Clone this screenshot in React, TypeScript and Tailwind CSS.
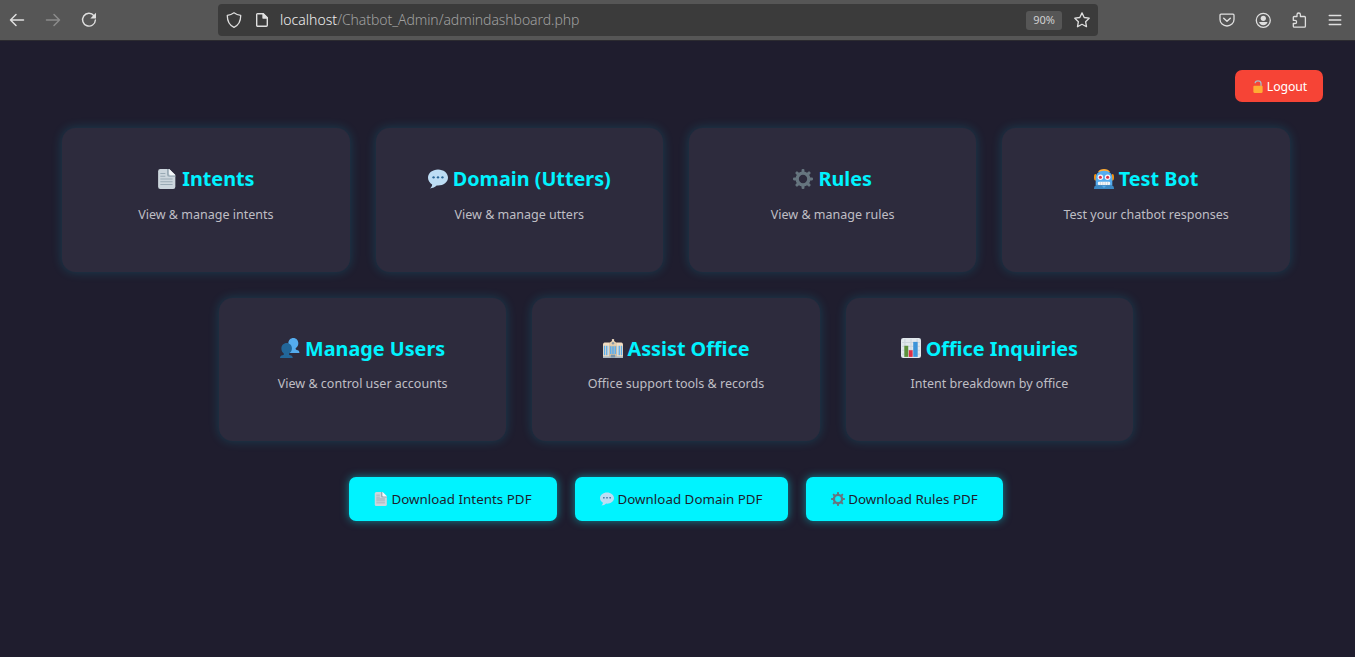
import type { ReactNode } from "react";

type IconProps = { className: string };

function PageIcon({ className }: IconProps) {
  return (
    <svg viewBox="0 0 36 36" className={className}>
      <path fill="#CCD6DD" d="M33 32a4 4 0 0 1-4 4H6a4 4 0 0 1-4-4V4a4 4 0 0 1 4-4h16l11 11v21Z" />
      <path fill="#F5F8FA" d="M22 0v8a3 3 0 0 0 3 3h8L22 0Z" />
      <path fill="#99AAB5" d="M18 0h3v9a3 3 0 0 0 3 3h9v2h-11a4 4 0 0 1-4-4V0ZM6 7h9v2H6V7Zm0 5h9v2H6v-2Zm0 5h22v2H6v-2Zm0 5h22v2H6v-2Zm0 5h22v2H6v-2Z" />
    </svg>
  );
}

function SpeechIcon({ className }: IconProps) {
  return (
    <svg viewBox="0 0 36 36" className={className}>
      <path fill="#BDDDF4" d="M18 1C8 1 0 7.500 0 15.700c0 5 3 9.400 7.500 12C7.300 30.500 6 33 3.300 35c5.200-.300 9.700-2.300 12.400-5.200.800.100 1.500.100 2.300.100 10 0 18-6.300 18-14.400S28 1 18 1Z" />
      <circle cx="10" cy="15" r="2.100" fill="#2A6797" />
      <circle cx="18" cy="15" r="2.100" fill="#2A6797" />
      <circle cx="26" cy="15" r="2.100" fill="#2A6797" />
    </svg>
  );
}

function GearIcon({ className }: IconProps) {
  return (
    <svg viewBox="0 0 36 36" className={className}>
      <g fill="#66757F">
        <path
          fillRule="evenodd"
          d="M18 4.500a13.500 13.500 0 1 0 0 27 13.500 13.500 0 0 0 0-27Zm0 6a7.500 7.500 0 1 1 0 15 7.500 7.500 0 0 1 0-15Z"
        />
        {[0, 45, 90, 135, 180, 225, 270, 315].map((angle) => (
          <rect key={angle} x="15.400" y="0" width="5.200" height="7" rx="2" transform={`rotate(${angle} 18 18)`} />
        ))}
      </g>
    </svg>
  );
}

function RobotIcon({ className }: IconProps) {
  return (
    <svg viewBox="0 0 36 36" className={className}>
      <ellipse cx="33.500" cy="15" rx="2.500" ry="6" fill="#F4900C" />
      <ellipse cx="2.500" cy="15" rx="2.500" ry="6" fill="#F4900C" />
      <path fill="#FFAC33" d="M7 6C9 2 13 0 18 0s9 2 11 6H7Z" />
      <path fill="#55ACEE" d="M18 3C9 3 3 8 3 17v13h30V17C33 8 27 3 18 3Z" />
      <path fill="#3B88C3" d="M3 30h30c2 0 3 2 3 6H0c0-4 1-6 3-6Z" />
      <path fill="#55ACEE" d="M14 30h8l-4 4-4-4Z" />
      <circle cx="11.500" cy="15" r="5" fill="#F5F8FA" />
      <circle cx="24.500" cy="15" r="5" fill="#F5F8FA" />
      <circle cx="11.500" cy="15" r="2.700" fill="#DD2E44" />
      <circle cx="24.500" cy="15" r="2.700" fill="#DD2E44" />
      <rect x="7" y="23" width="22" height="6" rx="2" fill="#F5F8FA" />
      <path stroke="#99AAB5" strokeWidth=".7" d="M11.500 23v6m4.300-6v6m4.400-6v6m4.300-6v6" />
    </svg>
  );
}

function UsersIcon({ className }: IconProps) {
  return (
    <svg viewBox="0 0 36 36" className={className}>
      <path fill="#55ACEE" d="M24 0c-5 0-9 4-9 9.500 0 3.800 1.800 7 4.500 8.700.600 2.600-.500 3.700-2.500 4.300V27h18c0-4-1.700-5-5-5.500-1.800-.300-2.200-1.500-1.600-3.300C31.200 16.500 33 13.300 33 9.500 33 4 29 0 24 0Z" />
      <path fill="#226699" d="M12 9c-5.200 0-9.500 4-9.500 10 0 4 1.700 7.200 4.300 9 .600 1.800-.300 2.600-2.300 3C1.500 31.600 0 33 0 36h23c0-3-1.500-4.400-4.500-5-2-.400-2.800-1.200-2.100-3 3-1.800 5.100-5 5.100-9 0-6-4.300-10-9.500-10Z" />
    </svg>
  );
}

function OfficeIcon({ className }: IconProps) {
  return (
    <svg viewBox="0 0 36 36" className={className}>
      <path fill="#F1DCC1" d="M0 12c0-2 1-4 3-4h9v28H0V12Zm24-4h9c2 0 3 2 3 4v24H24V8Z" />
      <path fill="#D9C3A3" d="M11 9h14v27H11z" />
      <path fill="#E6CFAE" d="m11 9 7-5 7 5v5H11V9Z" />
      <path fill="#F1DCC1" d="M16 2h4v4h-4z" />
      <circle cx="18" cy="9.500" r="2.200" fill="#8899A6" />
      <path fill="#5DADEC" d="M1.500 14H4v17H1.500V14Zm4 0H8v17H5.500V14ZM12.500 15h2.800v14h-2.800V15Zm4 0h3v14h-3V15Zm4.200 0h2.800v14h-2.800V15ZM28 14h2.500v17H28V14Zm4 0h2.500v17H32V14Z" />
      <path fill="#BDDDF4" d="M9 14h1.500v17H9V14Zm16.500 0H27v17h-1.500V14Z" />
      <path fill="#AAB8C2" d="M0 33h36v3H0z" />
      <path fill="#7895AC" d="M14 30h8v5h-8z" />
    </svg>
  );
}

function ChartIcon({ className }: IconProps) {
  return (
    <svg viewBox="0 0 36 36" className={className}>
      <rect width="36" height="36" rx="4" fill="#E1E8ED" />
      <path stroke="#CCD6DD" strokeWidth="2" d="M2 8h32M2 15h32M2 22h32M2 29h32M7 2v32M18 2v32M29 2v32" />
      <path fill="#5C913B" d="M6 14h7v20H6z" />
      <path fill="#DD2E44" d="M14 22h7v12h-7z" />
      <path fill="#3B94D9" d="M22 7h8v27h-8z" />
    </svg>
  );
}

function UnlockIcon({ className }: IconProps) {
  return (
    <svg viewBox="0 0 28 36" className={className}>
      <path fill="none" stroke="#AAB8C2" strokeWidth="3.500" d="M6 9c0-4.500 3.500-7 8-7s8.500 3 8.500 8v8" />
      <rect x="1" y="16" width="26" height="20" rx="3" fill="#FFAC33" />
    </svg>
  );
}

function ToolIcon({ children, className = "" }: { children: ReactNode; className?: string }) {
  return (
    <svg
      viewBox="0 0 16 16"
      fill="none"
      stroke="currentColor"
      strokeWidth="1.3"
      strokeLinecap="round"
      strokeLinejoin="round"
      className={`size-4 shrink-0 ${className}`}
    >
      {children}
    </svg>
  );
}

function Toolbar() {
  return (
    <header className="flex h-[41px] items-center border-b border-[#2c2b30] bg-[#565656] text-[#dfdfdf]">
      <div className="flex w-[218px] items-center gap-5 pl-[9px]">
        <ToolIcon>
          <path strokeWidth="1.500" d="M14.500 8H1.500M7 2.500 1.500 8 7 13.500" />
        </ToolIcon>
        <ToolIcon className="text-[#8b8b8b]">
          <path strokeWidth="1.500" d="M1.500 8h13M9 2.500 14.500 8 9 13.500" />
        </ToolIcon>
        <ToolIcon>
          <path strokeWidth="1.400" d="M13 3.700A6.400 6.400 0 1 0 14.400 8" />
          <path fill="currentColor" stroke="none" d="M15 .800v5.700H9.300L15 .800Z" />
        </ToolIcon>
      </div>
      <div className="flex h-8 w-[880px] items-center rounded bg-[#3b3b3b] px-2">
        <ToolIcon>
          <path d="M8 .800c2 1.500 4.200 2.300 6.700 2.600C14.800 9 12.700 13.200 8 15.300 3.300 13.200 1.200 9 1.300 3.400 3.800 3.100 6 2.300 8 .800Z" />
        </ToolIcon>
        <ToolIcon className="ml-3">
          <path strokeWidth="1.400" d="M4 1.700h5.300l4 4v7.600a1 1 0 0 1-1 1H3.700a1 1 0 0 1-1-1V2.700a1 1 0 0 1 1.300-1Z" />
          <path fill="currentColor" d="M9 1.700v4.300h4.300L9 1.700Z" />
        </ToolIcon>
        <span className="pl-2.5 text-[14px] leading-5 font-light tracking-[-0.070px] whitespace-nowrap text-[#a0a0a0]">
          <span className="tracking-[0.030px] text-[#f0f0f0]">localhost</span>/Chatbot_Admin/admindashboard.php
        </span>
        <span className="ml-auto flex h-[19px] w-9 items-center justify-center rounded-[3px] bg-[#565656] text-[11px] text-[#d0d0d0]">90%</span>
        <ToolIcon className="ml-3">
          <path d="m8 .900 2.200 4.600 5 .700-3.600 3.500.900 5L8 12.300l-4.500 2.400.900-5L.800 6.200l5-.700L8 .900Z" />
        </ToolIcon>
      </div>
      <div className="ml-auto flex items-center gap-5 pr-3">
        <ToolIcon>
          <path d="M2 2.200h12a1 1 0 0 1 1 1v4.300a7 6.500 0 0 1-14 0V3.200a1 1 0 0 1 1-1Z" />
          <path strokeWidth="1.500" d="m4.700 6.200 3.300 3 3.300-3" />
        </ToolIcon>
        <ToolIcon>
          <circle cx="8.300" cy="8.300" r="7" />
          <circle cx="8.300" cy="6.300" r="2.600" fill="currentColor" stroke="none" />
          <path fill="currentColor" stroke="none" d="M4.100 10.100h8.400c-.3 2-2 3.200-4.200 3.200s-3.900-1.200-4.200-3.200Z" />
        </ToolIcon>
        <ToolIcon>
          <path d="M2.300 5.500a1 1 0 0 1 1-1H6V2.700a1.700 1.700 0 0 1 3.400 0v1.800h4a1 1 0 0 1 1 1v8.700a1 1 0 0 1-1 1H3.300a1 1 0 0 1-1-1v-2.700H4a1.600 1.600 0 0 0 0-3.200H2.300V5.500Z" />
        </ToolIcon>
        <ToolIcon>
          <path d="M2.200 3.500h11.600M2.200 8h11.600M2.200 12.500h11.600" />
        </ToolIcon>
      </div>
    </header>
  );
}

type CardProps = { icon: ReactNode; title: string; text: string };

function Card({ icon, title, text }: CardProps) {
  return (
    <article className="flex h-[143.500px] w-[287.500px] flex-col items-center rounded-[13.500px] bg-[#2d2b3d] pt-[37.500px] shadow-[0_0_11px_rgba(0,200,230,0.2)]">
      <h2 className="flex h-[27px] items-center gap-[5px] text-[19.800px] font-bold whitespace-nowrap text-[#00f3ff]">
        {icon}
        <span>{title}</span>
      </h2>
      <p className="mt-[13px] text-[12.530px] leading-[17px] whitespace-nowrap text-[#bfbec4]">{text}</p>
    </article>
  );
}

function DownloadButton({ icon, label, className }: { icon: ReactNode; label: string; className: string }) {
  return (
    <button
      className={`flex h-11 items-center justify-center gap-[3px] rounded-[7px] bg-[#00f3ff] text-[13.333px] tracking-[0.030px] whitespace-nowrap text-[#1e1e2f] shadow-[0_0_9px_rgba(0,243,255,0.5)] ${className}`}
    >
      {icon}
      <span className="pt-px">{label}</span>
    </button>
  );
}

const emoji = "mb-px size-5 shrink-0";
const smallEmoji = "size-[14px] shrink-0";

export default function App() {
  return (
    <div className="h-[657px] w-full overflow-hidden bg-[#1f1d2e] font-['Noto_Sans',sans-serif]">
      <Toolbar />
      <main>
        <div className="flex justify-end pt-[29px] pr-8">
          <button className="flex h-8 w-[88px] items-center justify-center gap-1 rounded-[7px] bg-[#f64436] pl-0.5 text-[12.300px] tracking-[-0.1px] text-white">
            <UnlockIcon className="h-[13px] w-[10px]" />
            <span className="pt-0.5">Logout</span>
          </button>
        </div>
        <section className="flex flex-col items-center gap-[26px] pt-[26px] pr-[3px]">
          <div className="flex gap-[25.900px]">
            <Card icon={<PageIcon className={emoji} />} title="Intents" text="View & manage intents" />
            <Card icon={<SpeechIcon className={emoji} />} title="Domain (Utters)" text="View & manage utters" />
            <Card icon={<GearIcon className={emoji} />} title="Rules" text="View & manage rules" />
            <Card icon={<RobotIcon className={emoji} />} title="Test Bot" text="Test your chatbot responses" />
          </div>
          <div className="flex gap-[25.900px]">
            <Card icon={<UsersIcon className={emoji} />} title="Manage Users" text="View & control user accounts" />
            <Card icon={<OfficeIcon className={emoji} />} title="Assist Office" text="Office support tools & records" />
            <Card icon={<ChartIcon className={emoji} />} title="Office Inquiries" text="Intent breakdown by office" />
          </div>
        </section>
        <div className="flex justify-center gap-[18px] pt-9 pr-[3px]">
          <DownloadButton className="w-[208px]" icon={<PageIcon className={smallEmoji} />} label="Download Intents PDF" />
          <DownloadButton className="w-[213px]" icon={<SpeechIcon className={smallEmoji} />} label="Download Domain PDF" />
          <DownloadButton className="w-[197px]" icon={<GearIcon className={smallEmoji} />} label="Download Rules PDF" />
        </div>
      </main>
    </div>
  );
}
